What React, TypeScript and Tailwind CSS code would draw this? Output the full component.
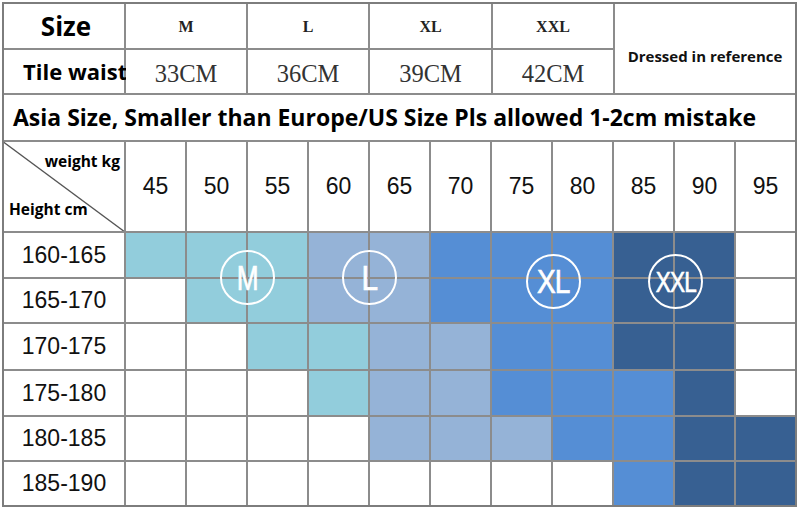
import React from 'react';

// Size chart: waist table on top, weight/height matrix below
const weights = [45, 50, 55, 60, 65, 70, 75, 80, 85, 90, 95];

// M = M, L = L, X = XL, Y = XXL, W = empty
const rows: { label: string; fill: string }[] = [
  { label: '160-165', fill: 'MMMLLXXXYYW' },
  { label: '165-170', fill: 'WMMLLXXXYYW' },
  { label: '170-175', fill: 'WWMMLLXXYYW' },
  { label: '175-180', fill: 'WWWMLLXXXYW' },
  { label: '180-185', fill: 'WWWWLLLXXYY' },
  { label: '185-190', fill: 'WWWWWWWWXYY' },
];

const fillClass: Record<string, string> = {
  M: 'bg-[#92cddc]',
  L: 'bg-[#95b3d7]',
  X: 'bg-[#558ed5]',
  Y: 'bg-[#376092]',
  W: 'bg-white',
};

const sizes = [
  { name: 'M', waist: '33CM' },
  { name: 'L', waist: '36CM' },
  { name: 'XL', waist: '39CM' },
  { name: 'XXL', waist: '42CM' },
];

const sans = "font-['Open_Sans',sans-serif]";
const serif = "font-['Liberation_Serif',serif]";
const arial = "font-['Liberation_Sans',Arial,sans-serif]";

const SizeBadge: React.FC<{ text: string; className: string; textClass: string }> = ({ text, className, textClass }) => (
  <div
    className={`absolute flex h-[55px] w-[55px] items-center justify-center rounded-full border-[2.5px] border-white ${className}`}
  >
    <span className={`${arial} leading-none text-white [-webkit-text-stroke:0.7px_white] ${textClass}`}>{text}</span>
  </div>
);

export default function App() {
  return (
    <div className="h-[510px] w-[800px] overflow-hidden bg-white pl-[2px] pt-[2px]">
      <div className="relative flex w-[795px] flex-col gap-[2px] border-2 border-[#7d7d7d] bg-[#8c8c8c]">
        {/* Top table */}
        <div className="grid grid-cols-[120px_120px_120px_121px_120px_1fr] grid-rows-[44px_43px] gap-[2px]">
          <div className={`flex items-center justify-center bg-white pl-[4px] text-[26px] font-bold text-black ${sans}`}>Size</div>
          {sizes.map((s) => (
            <div key={s.name} className={`flex items-center justify-center bg-white pt-[2px] text-[16px] font-bold text-[#222] ${serif}`}>
              {s.name}
            </div>
          ))}
          <div className={`row-span-2 flex items-center justify-center bg-white pt-[15px] text-[15px] font-bold text-[#111] ${sans}`}>
            Dressed in reference
          </div>
          <div className={`flex items-center whitespace-nowrap bg-white pl-[19px] text-[22px] font-bold text-black ${sans}`}>
            Tile waist
          </div>
          {sizes.map((s) => (
            <div key={s.waist} className={`flex items-center justify-center bg-white pt-[5px] text-[24.5px] text-[#333] ${serif}`}>
              {s.waist}
            </div>
          ))}
        </div>

        {/* Note row */}
        <div className={`flex h-[45px] items-center whitespace-nowrap bg-white pl-[9px] text-[23px] font-bold text-black ${sans}`}>
          Asia Size, Smaller than Europe/US Size Pls allowed 1-2cm mistake
        </div>

        {/* Weight / height matrix */}
        <div className="grid grid-cols-[120px_repeat(11,59px)] grid-rows-[89px_44px_43px_45px_44px_43px_43px] gap-[2px]">
          <div className={`relative flex flex-col justify-between bg-white pb-[10px] pt-[8px] text-[15.5px] font-bold text-black ${sans}`}>
            <svg className="absolute inset-0 h-full w-full" viewBox="0 0 120 89" preserveAspectRatio="none">
              <line x1="-2" y1="-1" x2="121" y2="90" stroke="#555" strokeWidth="1.4" />
            </svg>
            <span className="relative self-end pr-[4px]">weight kg</span>
            <span className="relative pl-[5px]">Height cm</span>
          </div>
          {weights.map((w) => (
            <div key={w} className={`flex items-center justify-center bg-white text-[23px] text-[#111] ${arial}`}>
              {w}
            </div>
          ))}
          {rows.map((r) => (
            <React.Fragment key={r.label}>
              <div className={`flex items-center justify-center bg-white text-[23px] text-[#111] ${arial}`}>{r.label}</div>
              {r.fill.split('').map((f, i) => (
                <div key={i} className={fillClass[f]} />
              ))}
            </React.Fragment>
          ))}
        </div>

        <SizeBadge text="M" className="left-[216px] top-[246px]" textClass="text-[35px] scale-x-75" />
        <SizeBadge text="L" className="left-[338px] top-[246px]" textClass="text-[35px] scale-x-85" />
        <SizeBadge text="XL" className="left-[522px] top-[250px]" textClass="text-[33px] scale-x-85 tracking-[-1px]" />
        <SizeBadge text="XXL" className="left-[644px] top-[250px]" textClass="text-[30px] scale-x-75 tracking-[-1px]" />
      </div>
    </div>
  );
}
